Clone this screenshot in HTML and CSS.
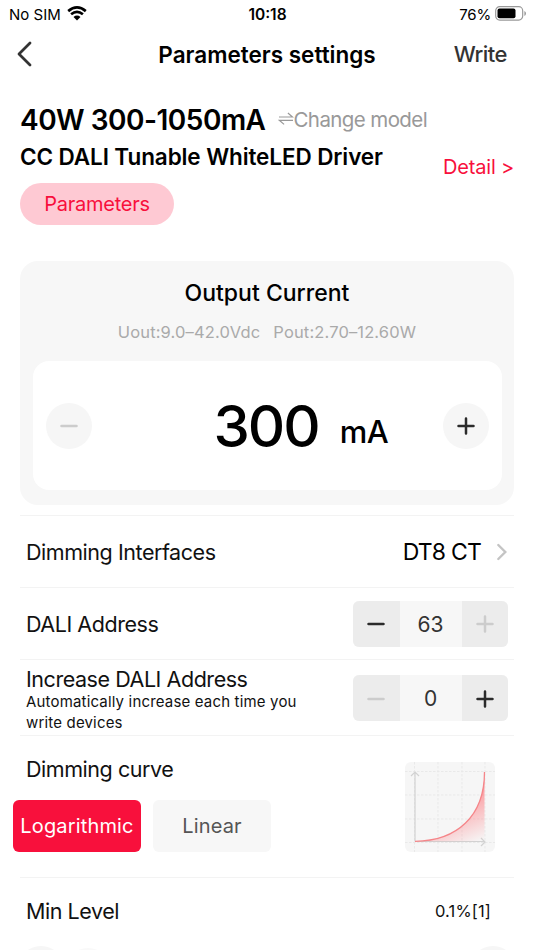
FILE: index.html
```html
<!DOCTYPE html>
<html lang="en">
<head>
<meta charset="utf-8">
<title>Parameters settings</title>
<link rel="stylesheet" href="styles.css">
</head>
<body>
<div class="screen">
  <header class="status">
    <div class="carrier"><span>No SIM</span>
      <svg class="wifi" width="20" height="15" viewBox="0 0 20 15"><g fill="none" stroke="#000" stroke-width="2.7"><path d="M1.2 5.1Q10 -2.2 18.800 5.100"/><path d="M4.100 8.200Q10 3.400 15.900 8.200"/></g><path d="M6.500 10.900Q10 8.200 13.500 10.900L10 14.500Z"/></svg>
    </div>
    <div class="clock">10:18</div>
    <div class="power"><span>76%</span>
      <svg width="32" height="15" viewBox="0 0 32 15"><rect x=".7" y=".7" width="27" height="13.400" rx="4" fill="none" stroke="#999" stroke-width="1.200"/><rect x="2.500" y="2.500" width="18" height="9.800" rx="2" fill="#000"/><path d="M29.400 5v5q1.600-.7 1.600-2.500T29.400 5" fill="#999"/></svg>
    </div>
  </header>
  <nav class="nav">
    <svg class="back" width="16" height="26" viewBox="0 0 16 26"><path d="M14 2 3 13l11 11" fill="none" stroke="#333" stroke-width="2.800" stroke-linecap="round" stroke-linejoin="round"/></svg>
    <h1><span>Parameters settings</span></h1>
    <span class="write">Write</span>
  </nav>
  <section class="product">
    <div class="model"><h2>40W 300-1050mA</h2>
      <div class="change"><svg width="16" height="16" viewBox="0 0 16 16"><path d="M1 6h13.500l-4.600-4M15 9.400H1.500l4.600 4" fill="none" stroke="#999" stroke-width="1.200"/></svg><span>Change model</span></div>
    </div>
    <div class="info">
      <div><h3>CC DALI Tunable WhiteLED Driver</h3><div class="tag"><span>Parameters</span></div></div>
      <span class="detail">Detail &gt;</span>
    </div>
  </section>
  <section class="card">
    <h4><span>Output Current</span></h4>
    <div class="range"><span>Uout:9.0–42.0Vdc</span><span>Pout:2.70–12.60W</span></div>
    <div class="current">
      <button class="round off"><svg width="18" height="18" viewBox="0 0 18 18"><path d="M1.500 9h15"/></svg></button>
      <div class="value"><span class="amount">300</span><span class="unit">mA</span></div>
      <button class="round"><svg width="18" height="18" viewBox="0 0 18 18"><path d="M1.500 9h15M9 1.500v15"/></svg></button>
    </div>
  </section>
  <section class="settings">
    <div class="row iface"><span class="label">Dimming Interfaces</span><div class="choice"><span>DT8 CT</span><svg width="12" height="18" viewBox="0 0 12 18"><path d="M2.300 2 9.300 9l-7 7" fill="none" stroke="#c4c4c4" stroke-width="2.400" stroke-linecap="round"/></svg></div></div>
    <div class="row addr"><span class="label">DALI Address</span>
      <div class="stepper"><button><svg width="18" height="18" viewBox="0 0 18 18"><path d="M1.500 9h15"/></svg></button><span>63</span><button class="off"><svg width="18" height="18" viewBox="0 0 18 18"><path d="M1.500 9h15M9 1.500v15"/></svg></button></div>
    </div>
    <div class="row incr"><div><div class="label">Increase DALI Address</div><p>Automatically increase each time you<br>write devices</p></div>
      <div class="stepper"><button class="off"><svg width="18" height="18" viewBox="0 0 18 18"><path d="M1.500 9h15"/></svg></button><span>0</span><button><svg width="18" height="18" viewBox="0 0 18 18"><path d="M1.500 9h15M9 1.500v15"/></svg></button></div>
    </div>
    <div class="row curve">
      <div><div class="label">Dimming curve</div><div class="modes"><button class="mode on"><span>Logarithmic</span></button><button class="mode"><span>Linear</span></button></div></div>
      <svg class="plot" width="90" height="90" viewBox="0 0 90 90">
        <defs><linearGradient id="fade" x1=".65" y1=".3" x2=".95" y2="1"><stop offset="0" stop-color="#ff6970" stop-opacity=".7"/><stop offset="1" stop-color="#ff6970" stop-opacity="0"/></linearGradient></defs>
        <rect width="90" height="90" rx="6" fill="#f6f6f6"/>
        <path d="M0 9.500h90M0 33h90M0 57h90M0 80.500h90M9.500 0v90M33 0v90M57 0v90M80 0v90" stroke="#e9e9e9" stroke-dasharray="2.500 1.500" fill="none"/>
        <path d="M10 79.500V11M6 14l4-4 4 4M10 79.500h69M76 76l4 4-4 4" fill="none" stroke="#d2d2d2" stroke-width="1.200"/>
        <path d="M10 79.300C52 79 79.500 54 79.500 10V79.300Z" fill="url(#fade)"/>
        <path d="M10 79.300C52 79 79.500 54 79.500 10" fill="none" stroke="#f58589" stroke-width="1.300"/>
      </svg>
    </div>
    <div class="row level"><span class="label">Min Level</span><span class="percent">0.1%[1]</span></div>
    <div class="slider"><i></i><i class="thumb"></i><i class="end"></i></div>
  </section>
</div>
</body>
</html>
```
FILE: styles.css
```css
* { box-sizing: border-box; }
body { margin: 0; font-family: Inter, sans-serif; color: #000; background: #fff; }
h1, h2, h3, h4, p { margin: 0; font-weight: 600; }
button { border: 0; padding: 0; margin: 0; font: inherit; color: inherit; display: flex; align-items: center; justify-content: center; }
svg { display: block; flex: none; }
span { white-space: nowrap; }
.screen { width: 534px; height: 950px; overflow: hidden; }
.status { height: 28px; padding: 0 7px 0 9px; display: grid; grid-template-columns: 1fr auto 1fr; align-items: center; font-size: 15px; line-height: 28px; }
.carrier, .power { display: flex; align-items: center; }
.carrier { gap: 6px; }
.wifi { margin-top: -2px; }
.power { justify-content: flex-end; gap: 4px; letter-spacing: -.2px; }
.power svg { margin-top: -2px; }
.clock { font-weight: 600; font-size: 15.500px; margin-right: 1px; padding-top: 1px; }
.nav { height: 54px; padding: 0 27px 2px; display: grid; grid-template-columns: 1fr auto 1fr; align-items: center; }
.back { margin-left: -11px; }
h1 { font-size: 22.500px; }
.write { justify-self: end; font-size: 22px; font-weight: 500; letter-spacing: -.5px; color: #333; }
.product { padding: 20px 20px 0; height: 179px; }
.model { display: flex; align-items: center; gap: 12px; height: 36px; }
h2 { font-size: 28px; letter-spacing: -.5px; white-space: nowrap; }
.change { display: flex; align-items: center; margin-top: -2px; font-size: 20.500px; letter-spacing: -.6px; color: #999; }
.info { display: flex; justify-content: space-between; }
h3 { font-size: 22.500px; line-height: 28px; margin-top: 5px; letter-spacing: -.1px; white-space: nowrap; }
.tag { margin-top: 12px; width: 154px; height: 42px; border-radius: 21px; background: #fec9d3; color: #f80f3c; font-size: 20px; letter-spacing: -.25px; display: flex; align-items: center; justify-content: center; }
.detail { color: #f80f3c; font-size: 20px; line-height: 24px; margin-top: 17px; letter-spacing: -.2px; }
.card { margin: 0 20px; height: 244px; border-radius: 18px; background: #f7f7f7; padding: 17px 12.500px 0; }
h4 { text-align: center; font-size: 23px; line-height: 30px; font-weight: 500; }
.range { display: flex; justify-content: center; gap: 13px; margin-top: 12px; height: 24px; font-size: 16.500px; letter-spacing: .14px; line-height: 24px; color: #aaa; }
.current { margin-top: 17px; height: 129px; border-radius: 16px; background: #fff; display: flex; align-items: center; padding: 0 13px; }
.round { width: 46px; height: 46px; border-radius: 50%; background: #f6f6f6; }
button path { fill: none; stroke: #2b2b2b; stroke-width: 2.500px; stroke-linecap: round; }
button.off path { stroke: #ccc; }
.value { flex: 1; display: flex; align-items: center; padding-left: 122px; }
.amount { font-size: 58px; font-weight: 500; letter-spacing: -2px; }
.unit { margin: 12px 0 0 21px; font-size: 31px; font-weight: 500; letter-spacing: -.5px; }
.settings { margin: 10px 20px 0; }
.row { border-top: 1px solid #f3f3f3; padding: 0 6px; display: flex; justify-content: space-between; }
.label { font-size: 21.500px; line-height: 26px; letter-spacing: -.45px; color: #111; }
.iface { height: 72px; align-items: center; }
.choice { display: flex; align-items: center; gap: 15px; font-size: 23px; letter-spacing: -.8px; }
.addr { height: 72px; align-items: center; }
.incr { height: 76px; padding-top: 6px; }
.incr .stepper { margin-top: 9px; }
p { font-size: 15px; font-weight: 400; line-height: 20.500px; letter-spacing: .17px; color: #111; }
.stepper { display: grid; grid-template-columns: 46.500px 62px 46.500px; height: 46px; border-radius: 6px; overflow: hidden; background: #f7f7f7; color: #333; font-size: 21px; line-height: 47px; text-align: center; }
.stepper button { background: #ececec; }
.curve { height: 142px; padding-top: 20px; }
.modes { display: flex; gap: 12px; margin: 18px 0 0 -13px; }
.mode { width: 118px; height: 52px; border-radius: 6px; background: #f7f7f7; color: #555; font-size: 20px; letter-spacing: .15px; }
.mode.on { width: 128px; background: #f8103c; color: #fff; }
.plot { margin: 6px 13px 0 0; }
.level { height: 66px; align-items: center; }
.percent { font-size: 16.500px; letter-spacing: .15px; margin-right: 17px; color: #111; }
.slider { display: flex; margin: 3px -2px 0; }
.slider i { flex: none; width: 46px; height: 46px; border-radius: 50%; background: #f6f6f6; }
.slider .thumb { margin: 2px 0 0 1px; background: #f9f9f9; }
.slider .end { margin-left: auto; }
```
